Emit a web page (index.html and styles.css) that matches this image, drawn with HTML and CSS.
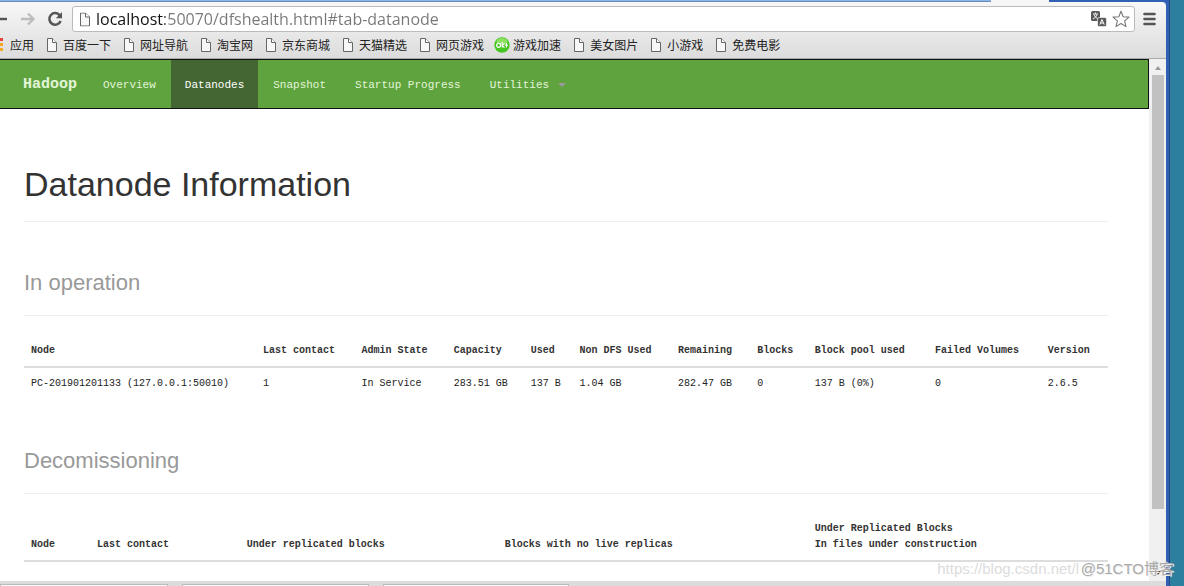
FILE: index.html
```html
<!DOCTYPE html>
<html lang="en">
<head>
<meta charset="utf-8">
<title>Datanode Information</title>
<link rel="stylesheet" href="styles.css">
</head>
<body>
<svg class="defs" aria-hidden="true">
  <symbol id="page" viewBox="0 0 12 14"><path d="M1.5 .5H6.5L10.5 4.5V13.5H1.5Z" fill="#f7f7f7" stroke="#666"/><path d="M6.5 .5V4.5H10.5" fill="#fff" stroke="#666"/></symbol>
</svg>
<div class="desktop">
  <div class="window">
    <div class="tabstrip"><span class="tabs-idle"></span><span class="tab-active"></span></div>
    <header class="chrome">
      <div class="toolbar">
        <button class="back" aria-label="Back"><svg width="8" height="16" viewBox="0 0 8 16"><path d="M0 8H7" stroke="#555" stroke-width="2.4"/></svg></button>
        <button class="forward" aria-label="Forward"><svg width="16" height="16" viewBox="0 0 16 16"><path d="M1 8H13M8 2.5L13.5 8L8 13.5" fill="none" stroke="#bdbdbd" stroke-width="2.4"/></svg></button>
        <button class="reload" aria-label="Reload"><svg width="16" height="16" viewBox="0 0 16 16"><path d="M12.8 4.4A5.8 5.8 0 1 0 13.6 10" fill="none" stroke="#555" stroke-width="2.5"/><path d="M15 1V7.2H8.8Z" fill="#555"/></svg></button>
        <div class="omnibox">
          <svg width="12" height="15" viewBox="0 0 12 14"><use href="#page"/></svg>
          <input class="url" type="text" aria-label="Address" value="localhost:50070/dfshealth.html#tab-datanode">
          <button aria-label="Translate"><svg width="16" height="16" viewBox="0 0 16 16"><rect x="0" y="0" width="9" height="10" rx="1.5" fill="#5a5a5a"/><path d="M2 3H7M4.5 1.5V3M3 3.5Q4 6.5 7 8M6.2 3.5Q5 6.5 2 8" fill="none" stroke="#fff" stroke-width=".9"/><rect x="6.5" y="6.5" width="9" height="9" rx="1.5" fill="#5a5a5a" stroke="#fff" stroke-width=".6"/><path d="M8.8 13.6L11 8.5L13.2 13.6M9.7 12H12.3" fill="none" stroke="#fff" stroke-width="1"/></svg></button>
          <button aria-label="Bookmark"><svg width="18" height="18" viewBox="0 0 18 18"><path d="M9 1.3L11.2 6.7L17 7.1L12.6 10.9L14 16.6L9 13.5L4 16.6L5.4 10.9L1 7.1L6.8 6.7Z" fill="#fff" stroke="#777" stroke-width="1.1" stroke-linejoin="round"/></svg></button>
        </div>
        <button class="menu" aria-label="Menu"><svg width="13" height="14" viewBox="0 0 13 14"><path d="M1.5 2H11.5M1.5 7H11.5M1.5 12H11.5" stroke="#555" stroke-width="2.6" stroke-linecap="round"/></svg></button>
      </div>
      <nav class="bookmarks" aria-label="Bookmarks">
        <a href="#"><svg class="apps" width="3" height="13" viewBox="0 0 3 13"><path d="M0 0H3V3H0Z" fill="#e8433a"/><path d="M0 5H3V8H0ZM0 10H3V13H0Z" fill="#f5a623"/></svg>应用</a>
        <a href="#"><svg width="12" height="14"><use href="#page"/></svg>百度一下</a>
        <a href="#"><svg width="12" height="14"><use href="#page"/></svg>网址导航</a>
        <a href="#"><svg width="12" height="14"><use href="#page"/></svg>淘宝网</a>
        <a href="#"><svg width="12" height="14"><use href="#page"/></svg>京东商城</a>
        <a href="#"><svg width="12" height="14"><use href="#page"/></svg>天猫精选</a>
        <a href="#"><svg width="12" height="14"><use href="#page"/></svg>网页游戏</a>
        <a href="#"><svg class="ball" width="16" height="16" viewBox="0 0 16 16"><circle cx="8" cy="8" r="7.7" fill="#45c51f"/><ellipse cx="8" cy="4.5" rx="5.5" ry="3.5" fill="#8be05f"/><circle cx="4.6" cy="8.3" r="2" fill="none" stroke="#fff" stroke-width="1.2"/><path d="M8.2 5V10.5M8.2 8.5L10.5 6.5M8.2 8.5L10.5 10.5M12.5 6V10.5M11 8.3H14" stroke="#fff" stroke-width="1.1"/></svg>游戏加速</a>
        <a href="#"><svg width="12" height="14"><use href="#page"/></svg>美女图片</a>
        <a href="#"><svg width="12" height="14"><use href="#page"/></svg>小游戏</a>
        <a href="#"><svg width="12" height="14"><use href="#page"/></svg>免费电影</a>
      </nav>
    </header>
    <div class="viewport">
      <div class="page">
        <nav class="navbar">
          <a class="brand" href="#">Hadoop</a>
          <a href="#">Overview</a>
          <a class="active" href="#">Datanodes</a>
          <a href="#">Snapshot</a>
          <a href="#">Startup Progress</a>
          <a href="#">Utilities <span class="caret"></span></a>
        </nav>
        <main class="content">
          <h1>Datanode Information</h1>
          <h2>In operation</h2>
          <table class="operation">
            <colgroup><col class="o1"><col class="o2"><col class="o3"><col class="o4"><col class="o5"><col class="o6"><col class="o7"><col class="o8"><col class="o9"><col class="o10"><col></colgroup>
            <thead><tr><th>Node</th><th>Last contact</th><th>Admin State</th><th>Capacity</th><th>Used</th><th>Non DFS Used</th><th>Remaining</th><th>Blocks</th><th>Block pool used</th><th>Failed Volumes</th><th>Version</th></tr></thead>
            <tbody><tr><td>PC-201901201133 (127.0.0.1:50010)</td><td>1</td><td>In Service</td><td>283.51 GB</td><td>137 B</td><td>1.04 GB</td><td>282.47 GB</td><td>0</td><td>137 B (0%)</td><td>0</td><td>2.6.5</td></tr></tbody>
          </table>
          <h2>Decomissioning</h2>
          <table class="decom">
            <colgroup><col class="d1"><col class="d2"><col class="d3"><col class="d4"><col></colgroup>
            <thead><tr><th>Node</th><th>Last contact</th><th>Under replicated blocks</th><th>Blocks with no live replicas</th><th>Under Replicated Blocks<br>In files under construction</th></tr></thead>
          </table>
        </main>
      </div>
      <div class="scrollbar"><span class="up"></span><span class="thumb"></span><span class="down"></span></div>
    </div>
    <footer class="shelf"><span></span><span></span><span></span></footer>
  </div>
  <div class="wallpaper"></div>
  <span class="mark mark-blog">https://blog.csdn.net/l</span>
  <span class="mark mark-cto">@51CTO博客</span>
</div>
</body>
</html>
```
FILE: styles.css
```css
* { box-sizing: border-box; }
body { margin: 0; font-family: "Liberation Sans", sans-serif; }
a { text-decoration: none; color: inherit; }
svg { display: block; flex: none; }
button { border: 0; padding: 0; background: none; flex: none; }
.defs { position: absolute; width: 0; height: 0; }

.desktop { position: relative; display: flex; height: 100vh; overflow: hidden; background: #2c7f9f; }
.window { flex: 1; min-width: 0; display: flex; flex-direction: column; background: #3260b5; border-right: 3px solid #3260b5; }
.wallpaper { width: 15px; border-left: 1px solid #234a80; background: #2c7f9f; }

.tabstrip { display: flex; height: 2px; }
.tabs-idle { width: 85%; background: #8ab5ea; border-bottom: 1px solid #6b8db8; }
.tab-active { width: 5%; background: #f6f6f6; }

.chrome { border-top-right-radius: 4px; border-bottom: 1px solid #aaa; background: linear-gradient(#f8f8f8, #dcdcdc); }
.toolbar { display: flex; align-items: center; height: 31px; padding: 3px 10px 0 0; }
.forward { margin-left: 12px; }
.reload { margin-left: 11px; }
.omnibox { display: flex; align-items: center; flex: 1; gap: 5px; height: 26px; margin: 0 8px 0 9px; padding: 0 4px 0 6px; border: 1px solid #bbb; border-radius: 3px; background: #fff; }
.url { flex: 1; min-width: 0; height: 22px; padding: 0; border: 0; outline: 0; font: 16px/22px "Open Sans", sans-serif; color: transparent; background: linear-gradient(90deg, #111 69px, #777 69px); -webkit-background-clip: text; background-clip: text; }

.bookmarks { display: flex; align-items: center; gap: 12px; height: 25px; padding-bottom: 2px; font: 12px/16px "Noto Sans CJK SC", sans-serif; color: #222; }
.bookmarks a { display: flex; align-items: center; gap: 5px; }
.bookmarks a .apps { margin-right: 2px; }
.bookmarks a .ball { margin: 0 -2px; }

.viewport { flex: 1; min-height: 0; display: flex; background: #fff; }
.page { flex: 1; min-width: 0; overflow: hidden; }
.navbar { display: flex; gap: 1px; height: 50px; padding-left: 9px; border: 1px solid #111; border-left: 0; background: #5fa33e; font: 11px/50px "Liberation Mono", monospace; color: #e3f5d9; }
.navbar a { height: 48px; padding: 0 14px; white-space: nowrap; }
.navbar .brand { font-size: 15px; font-weight: bold; padding-right: 11px; }
.navbar .active { background: #446633; color: #fff; }
.caret { display: inline-block; margin-left: 2px; border: 4px solid transparent; border-top-color: #999; border-bottom: 0; vertical-align: middle; }

.content { padding: 55px 41px 0 24px; color: #333; }
h1 { margin: 0; padding-bottom: 17px; border-bottom: 1px solid #eee; font-size: 34px; line-height: 40px; font-weight: normal; }
h2 { margin: 48px 0 19px; padding-bottom: 18px; border-bottom: 1px solid #eee; font-size: 22px; line-height: 28px; font-weight: normal; color: #999; }
h1 + h2 { margin-top: 47px; }
table { width: 100%; table-layout: fixed; border-collapse: separate; border-spacing: 0; font: 10px/16px "Liberation Mono", monospace; }
th, td { padding: 8px 0 7px 7px; text-align: left; white-space: nowrap; }
th { vertical-align: bottom; border-bottom: 2px solid #ddd; }
td { color: #222; }
.o1 { width: 21.4%; } .o2 { width: 9.1%; } .o3 { width: 8.5%; } .o4 { width: 7.1%; } .o5 { width: 4.5%; }
.o6 { width: 9.1%; } .o7 { width: 7.3%; } .o8 { width: 5.3%; } .o9 { width: 11.1%; } .o10 { width: 10.4%; }
.d1 { width: 6.1%; } .d2 { width: 13.8%; } .d3 { width: 23.8%; } .d4 { width: 28.6%; }

.scrollbar { display: flex; flex-direction: column; align-items: center; width: 17px; background: #f0f0f0; }
.up { margin: 7px 0 5px; border: 3px solid transparent; border-top: 0; border-bottom: 4px solid #999; }
.thumb { width: 12px; flex: 0 1 434px; background: #c1c1c1; }
.down { margin-top: auto; margin-bottom: 6px; border: 3px solid transparent; border-bottom: 0; border-top: 4px solid #444; }

.shelf { display: flex; gap: 14px; height: 5px; padding-top: 3px; background: #dcdcdc; }
.shelf span { flex: 0 0 16%; border: 1px solid #bbb; border-bottom: 0; background: #fafafa; }
.shelf span:first-child { flex-basis: 168px; }

.mark { position: absolute; bottom: 7px; white-space: nowrap; line-height: 20px; }
.mark-blog { right: 105px; font-size: 15px; color: #dcdcdc; }
.mark-cto { right: 10px; font: 15px/20px "Liberation Sans", "Noto Sans CJK SC", sans-serif; color: #aaa; text-shadow: 1px 1px 0 #eee; }
```
